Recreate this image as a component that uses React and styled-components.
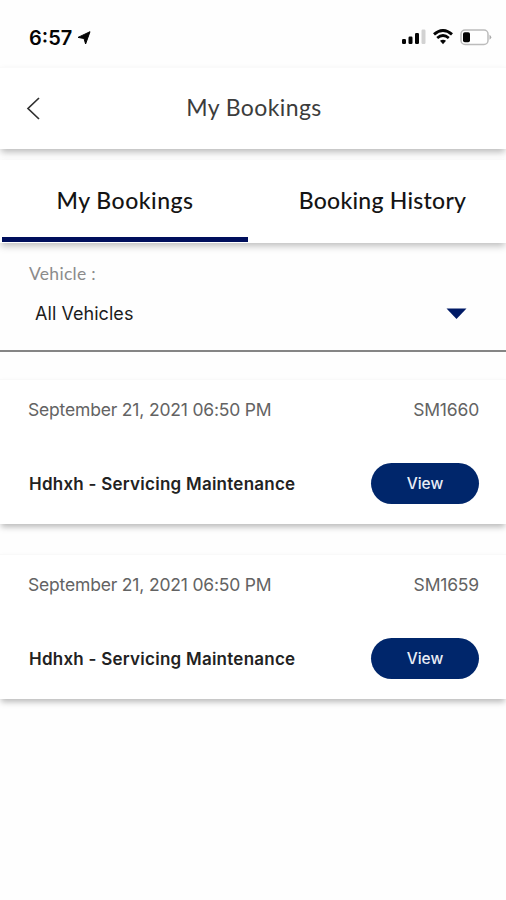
import React from "react";
import styled, { createGlobalStyle } from "styled-components";

const GlobalStyle = createGlobalStyle`
  *, *::before, *::after { box-sizing: border-box; }
  body { margin: 0; background: #fefefe; font-family: Inter, sans-serif; }
`;

const Screen = styled.main`
  width: 506px;
  height: 900px;
  overflow: hidden;
  background: #fefefe;
  display: flex;
  flex-direction: column;
`;

const StatusBar = styled.div`
  height: 67px;
  flex: none;
  display: flex;
  align-items: center;
  justify-content: space-between;
  padding: 8px 14px 0 29px;
`;

const Clock = styled.div`
  display: flex;
  align-items: center;
  gap: 5px;
  font-size: 20px;
  line-height: 24px;
  font-weight: 600;
  color: #050505;
`;

const StatusIcons = styled.div`
  display: flex;
  align-items: center;
  gap: 7px;
  padding-bottom: 1px;
`;

const Header = styled.header`
  height: 82px;
  flex: none;
  display: grid;
  grid-template-columns: 66px 1fr 66px;
  align-items: center;
  background: #fff;
  border-top: 1px solid #fafafa;
  box-shadow: 0 4px 7px -1px rgba(0, 0, 0, 0.28);
`;

const BackButton = styled.button`
  height: 40px;
  padding: 0 0 0 26px;
  border: 0;
  background: none;
  display: flex;
  align-items: center;
`;

const Title = styled.h1`
  margin: 0;
  padding: 0 0 4px 2px;
  text-align: center;
  font: 400 23px/30px Lato, sans-serif;
  letter-spacing: 0.4px;
  color: #3c3c3c;
`;

const Tabs = styled.nav`
  height: 83px;
  margin-top: 11px;
  flex: none;
  display: grid;
  grid-template-columns: 246px 1fr;
  padding-left: 2px;
  background: #fff;
  box-shadow: 0 4px 7px -1px rgba(0, 0, 0, 0.26);
`;

const Tab = styled.button`
  border: 0;
  border-bottom: 5px solid ${(p) => (p.$active ? "#000f5c" : "transparent")};
  background: none;
  margin: 0 0 1px;
  padding: 3px 0 0 ${(p) => (p.$active ? "0" : "11px")};
  text-align: center;
  font: 500 23px/30px Lato, sans-serif;
  letter-spacing: ${(p) => (p.$active ? "0.5px" : "0.25px")};
  color: #141414;
`;

const Filter = styled.section`
  height: 109px;
  flex: none;
  padding: 20px 39px 0 29px;
  border-bottom: 2px solid #858585;
`;

const FilterLabel = styled.div`
  font: 400 17.5px/22px Lato, sans-serif;
  letter-spacing: 0.3px;
  color: #8b8b8b;
`;

const Select = styled.div`
  display: flex;
  align-items: center;
  justify-content: space-between;
  margin-top: 16px;
  padding-left: 6px;
  font-size: 18px;
  line-height: 26px;
  letter-spacing: 0.05px;
  color: #1c1c1c;
`;

const Caret = styled.svg`
  margin-bottom: 2px;
`;

const List = styled.div`
  display: flex;
  flex-direction: column;
  gap: 30px;
  padding-top: 27px;
`;

const Card = styled.article`
  height: 145px;
  padding: 17px 27px 20px 28px;
  display: flex;
  flex-direction: column;
  justify-content: space-between;
  background: #fff;
  border-top: 1px solid #f9f9f9;
  box-shadow: 0 4px 6px -1px rgba(0, 0, 0, 0.27);
`;

const CardRow = styled.div`
  display: flex;
  align-items: center;
  justify-content: space-between;
`;

const Meta = styled.span`
  font-size: 17.5px;
  line-height: 26px;
  font-weight: 400;
  letter-spacing: -0.18px;
  color: #636363;
`;

const Service = styled.strong`
  padding-left: 1px;
  font-size: 17px;
  line-height: 26px;
  font-weight: 600;
  letter-spacing: 0.25px;
  color: #222;
`;

const ViewButton = styled.button`
  width: 108px;
  height: 41px;
  padding: 0;
  border: 0;
  border-radius: 21px;
  background: #00266b;
  color: #e9edf6;
  font: 500 15.5px/24px Inter, sans-serif;
`;

const LocationArrow = () => (
  <svg width="14" height="14" viewBox="0 0 14 14">
    <path d="M13 .7 8.6 13 7 7.5 1 6.4Z" fill="#050505" stroke="#050505" strokeWidth="1" strokeLinejoin="round" />
  </svg>
);

const Signal = () => (
  <svg width="24" height="16" viewBox="0 0 24 16">
    <rect x="0" y="10" width="4" height="5" rx="1.2" fill="#050505" />
    <rect x="6.5" y="7.5" width="4" height="7.5" rx="1.2" fill="#050505" />
    <rect x="13" y="4" width="4" height="11" rx="1.2" fill="#050505" />
    <rect x="19.5" y=".5" width="4" height="14.5" rx="1.2" fill="#d2d2d2" />
  </svg>
);

const Wifi = () => (
  <svg width="20" height="16" viewBox="0 0 20 16" fill="none" stroke="#050505">
    <path d="M1 5.4Q10-2.3 19 5.4" strokeWidth="3" />
    <path d="M4.2 9Q10 4 15.8 9" strokeWidth="2.7" />
    <path d="M7 11.7Q10 9.6 13 11.7L10 15.2Z" fill="#050505" stroke="none" />
  </svg>
);

const Battery = () => (
  <svg width="32" height="17" viewBox="0 0 32 17">
    <rect x="1" y="1" width="27" height="14.5" rx="4" fill="#fff" stroke="#bcbcbc" strokeWidth="1.5" />
    <rect x="3" y="3.3" width="7" height="10" rx="1.8" fill="#050505" />
    <path d="M29.5 5.8Q33 8.3 29.5 10.8Z" fill="#aaa" />
  </svg>
);

const bookings = [
  { id: "SM1660", date: "September 21, 2021 06:50 PM", service: "Hdhxh - Servicing Maintenance" },
  { id: "SM1659", date: "September 21, 2021 06:50 PM", service: "Hdhxh - Servicing Maintenance" },
];

export default function App() {
  return (
    <Screen>
      <GlobalStyle />
      <StatusBar>
        <Clock><span>6:57</span><LocationArrow /></Clock>
        <StatusIcons><Signal /><Wifi /><Battery /></StatusIcons>
      </StatusBar>
      <Header>
        <BackButton aria-label="Back">
          <svg width="14" height="23" viewBox="0 0 14 23" fill="none" stroke="#303030" strokeWidth="1.7">
            <path d="M13 1 2 11.5 13 22" />
          </svg>
        </BackButton>
        <Title>My Bookings</Title>
      </Header>
      <Tabs>
        <Tab $active>My Bookings</Tab>
        <Tab>Booking History</Tab>
      </Tabs>
      <Filter>
        <FilterLabel>Vehicle :</FilterLabel>
        <Select>
          <span>All Vehicles</span>
          <Caret width="21" height="11" viewBox="0 0 21 11"><path d="M.5 .5H20.5L10.5 11Z" fill="#001a66" /></Caret>
        </Select>
      </Filter>
      <List>
        {bookings.map((b) => (
          <Card key={b.id}>
            <CardRow><Meta>{b.date}</Meta><Meta>{b.id}</Meta></CardRow>
            <CardRow><Service>{b.service}</Service><ViewButton>View</ViewButton></CardRow>
          </Card>
        ))}
      </List>
    </Screen>
  );
}
